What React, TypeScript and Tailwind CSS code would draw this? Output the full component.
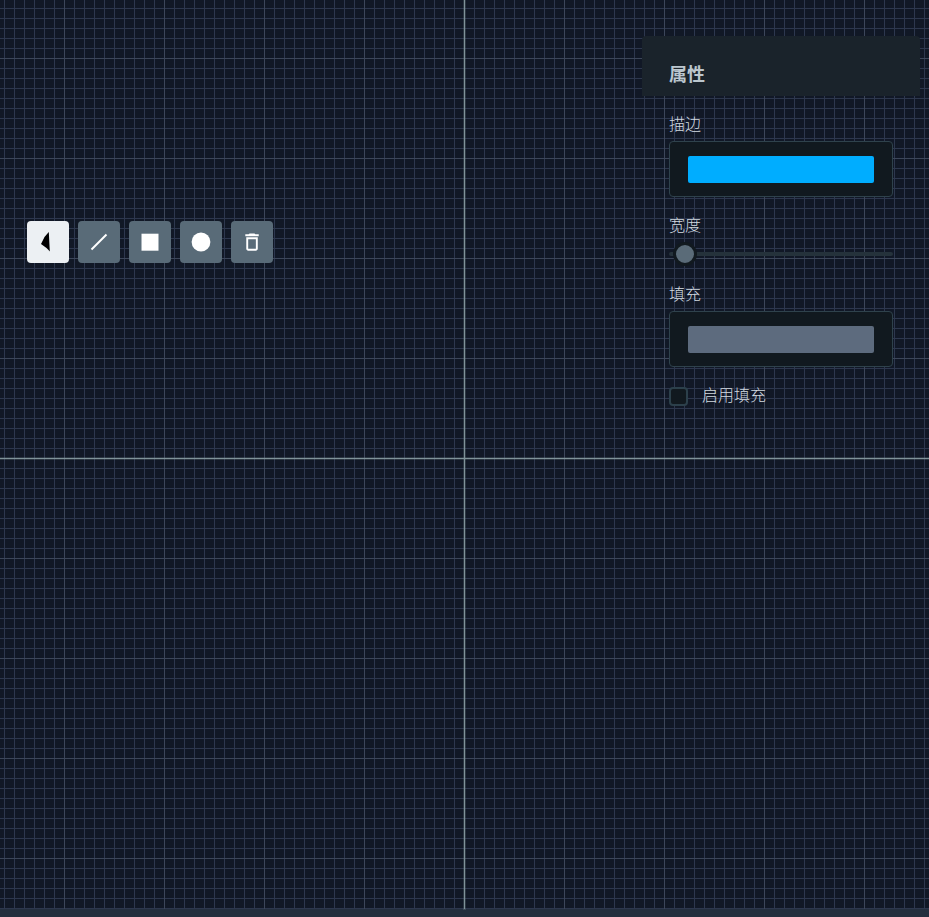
import { useState, type ReactNode } from "react";

const tools: { name: string; icon: ReactNode }[] = [
  { name: "选择", icon: <path d="M12.800 2 13.800 21.500 12.500 20 10.500 18 5 14 8.500 7Z" fill="#000" /> },
  { name: "直线", icon: <path d="M4.500 19.500 19.500 4.500" stroke="currentColor" strokeWidth="2" /> },
  { name: "矩形", icon: <path d="M3.500 3.700h17v17h-17z" fill="currentColor" /> },
  { name: "圆形", icon: <circle cx="12" cy="12" r="9.4" fill="currentColor" /> },
  {
    name: "删除",
    icon: (
      <path
        transform="translate(.5 .5) scale(.96)"
        d="M6 19c0 1.100.9 2 2 2h8c1.100 0 2-.9 2-2V7H6v12zM8 9h8v10H8V9zm7.500-5l-1-1h-5l-1 1H5v2h14V4z"
        fill="currentColor"
      />
    ),
  },
];

function ColorField({ id, label, initial }: { id: string; label: string; initial: string }) {
  const [color, setColor] = useState(initial);
  return (
    <div>
      <label htmlFor={id} className="block text-base leading-6 font-light text-[#d3dbe1]">{label}</label>
      <input
        id={id}
        type="color"
        value={color}
        onChange={(e) => setColor(e.target.value)}
        className="mt-[5px] block h-14 w-full appearance-none rounded border border-[#2f424c] bg-[#11191f] px-[18px] pt-[14px] pb-[13px] [&::-webkit-color-swatch-wrapper]:p-0 [&::-webkit-color-swatch]:rounded-xs [&::-webkit-color-swatch]:border-0"
      />
    </div>
  );
}

export default function App() {
  const [tool, setTool] = useState("选择");
  const [width, setWidth] = useState(2);
  const [filled, setFilled] = useState(false);

  return (
    <div className="flex h-screen flex-col overflow-hidden bg-[#242f3e] font-['Noto_Sans','Noto_Sans_CJK_SC',sans-serif] text-[#bbc6ce]">
      <main className="relative min-h-0 flex-1 bg-[#111826] bg-[linear-gradient(to_right,#3c465a_1px,transparent_1px),linear-gradient(to_bottom,#3c465a_1px,transparent_1px),linear-gradient(to_right,#2d374e_1px,transparent_1px),linear-gradient(to_bottom,#2d374e_1px,transparent_1px)] bg-[size:100px_100px,100px_100px,10px_10px,10px_10px] bg-[position:64px_58px,64px_58px,4px_8px,4px_8px]">
        <div className="absolute inset-y-0 left-[calc(50%-1px)] w-px bg-[#7f9299] shadow-[0_0_0_1px_#7f929940]" />
        <div className="absolute inset-x-0 top-[458px] h-px bg-[#7f9299] shadow-[0_0_0_1px_#7f929940]" />
        <div className="relative flex items-start justify-between pr-[9px] pl-[27px]">
          <div role="toolbar" className="mt-[221px] flex gap-[9px]">
            {tools.map(({ name, icon }) => (
              <button
                key={name}
                type="button"
                aria-label={name}
                aria-pressed={tool === name}
                onClick={() => setTool(name)}
                className="flex size-[42px] items-center justify-center rounded bg-[#596b78] text-white aria-pressed:bg-[#ecf0f3]"
              >
                <svg viewBox="0 0 24 24" className="size-6">{icon}</svg>
              </button>
            ))}
          </div>
          <aside className="mt-9 w-[278px]">
            <h2 className="h-[60px] rounded-t bg-[#1a232b] px-[27px] pt-[26px] text-lg leading-6 font-bold">属性</h2>
            <div className="px-[27px] pt-4">
              <ColorField id="stroke" label="描边" initial="#00adff" />
              <div className="mt-4">
                <label htmlFor="width" className="block text-base leading-6 font-light text-[#d3dbe1]">宽度</label>
                <input
                  id="width"
                  type="range"
                  min={0}
                  max={100}
                  value={width}
                  onChange={(e) => setWidth(Number(e.target.value))}
                  className="mt-[5px] block h-6 w-full appearance-none bg-transparent [&::-webkit-slider-runnable-track]:h-1 [&::-webkit-slider-runnable-track]:rounded [&::-webkit-slider-runnable-track]:bg-[#25323b] [&::-webkit-slider-thumb]:-mt-[10px] [&::-webkit-slider-thumb]:size-6 [&::-webkit-slider-thumb]:appearance-none [&::-webkit-slider-thumb]:rounded-full [&::-webkit-slider-thumb]:border-[3px] [&::-webkit-slider-thumb]:border-[#11191f] [&::-webkit-slider-thumb]:bg-[#5a6b78]"
                />
              </div>
              <div className="mt-4">
                <ColorField id="fill" label="填充" initial="#5d6b7e" />
              </div>
              <label className="mt-4 flex items-center gap-[14px] text-base leading-6 font-light text-[#d3dbe1]">
                <input
                  type="checkbox"
                  checked={filled}
                  onChange={(e) => setFilled(e.target.checked)}
                  className="mt-0.5 size-[19px] appearance-none rounded border-2 border-[#2c404b] bg-[#11191f] checked:bg-[#5a6b78]"
                />
                启用填充
              </label>
            </div>
          </aside>
        </div>
      </main>
      <footer className="h-2" />
    </div>
  );
}
